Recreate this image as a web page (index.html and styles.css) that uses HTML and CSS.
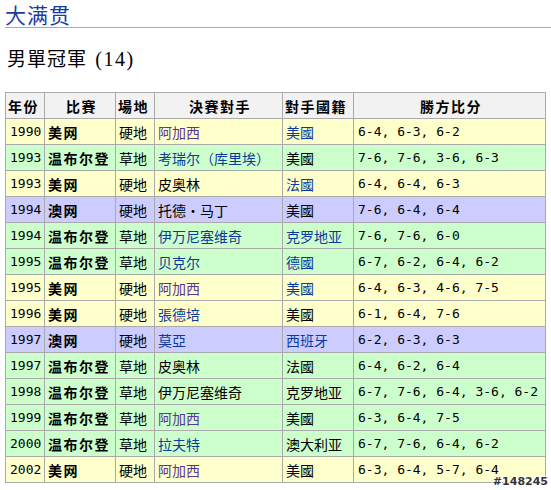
FILE: index.html
```html
<!DOCTYPE html>
<html>
<head>
<meta charset="utf-8">
<link rel="stylesheet" href="styles.css">
</head>
<body>
<h2 class="title">大满贯</h2>
<h3 class="sub">男單冠軍 <span class="cnt">(14)</span></h3>
<table class="grid">
<colgroup>
<col style="width:39px"><col style="width:71px"><col style="width:39px"><col style="width:128px"><col style="width:71px"><col style="width:192px">
</colgroup>
<thead>
<tr><th class="l">年份</th><th>比賽</th><th class="l">場地</th><th>決賽對手</th><th class="l">對手國籍</th><th>勝方比分</th></tr>
</thead>
<tbody>
<tr class="us"><td class="n">1990</td><td class="b">美网</td><td>硬地</td><td><span class="v">阿加西</span></td><td><span class="a">美國</span></td><td class="n">6-4, 6-3, 6-2</td></tr>
<tr class="wb"><td class="n">1993</td><td class="b">温布尔登</td><td>草地</td><td><span class="a">考瑞尔（库里埃）</span></td><td>美國</td><td class="n">7-6, 7-6, 3-6, 6-3</td></tr>
<tr class="us"><td class="n">1993</td><td class="b">美网</td><td>硬地</td><td>皮奥林</td><td><span class="a">法國</span></td><td class="n">6-4, 6-4, 6-3</td></tr>
<tr class="au"><td class="n">1994</td><td class="b">澳网</td><td>硬地</td><td>托德·马丁</td><td>美國</td><td class="n">7-6, 6-4, 6-4</td></tr>
<tr class="wb"><td class="n">1994</td><td class="b">温布尔登</td><td>草地</td><td><span class="a">伊万尼塞维奇</span></td><td><span class="a">克罗地亚</span></td><td class="n">7-6, 7-6, 6-0</td></tr>
<tr class="wb"><td class="n">1995</td><td class="b">温布尔登</td><td>草地</td><td><span class="a">贝克尔</span></td><td><span class="a">德國</span></td><td class="n">6-7, 6-2, 6-4, 6-2</td></tr>
<tr class="us"><td class="n">1995</td><td class="b">美网</td><td>硬地</td><td><span class="v">阿加西</span></td><td><span class="a">美國</span></td><td class="n">6-4, 6-3, 4-6, 7-5</td></tr>
<tr class="us"><td class="n">1996</td><td class="b">美网</td><td>硬地</td><td><span class="a">張德培</span></td><td>美國</td><td class="n">6-1, 6-4, 7-6</td></tr>
<tr class="au"><td class="n">1997</td><td class="b">澳网</td><td>硬地</td><td><span class="a">莫亞</span></td><td><span class="a">西班牙</span></td><td class="n">6-2, 6-3, 6-3</td></tr>
<tr class="wb"><td class="n">1997</td><td class="b">温布尔登</td><td>草地</td><td>皮奥林</td><td>法國</td><td class="n">6-4, 6-2, 6-4</td></tr>
<tr class="wb"><td class="n">1998</td><td class="b">温布尔登</td><td>草地</td><td>伊万尼塞维奇</td><td>克罗地亚</td><td class="n">6-7, 7-6, 6-4, 3-6, 6-2</td></tr>
<tr class="wb"><td class="n">1999</td><td class="b">温布尔登</td><td>草地</td><td><span class="v">阿加西</span></td><td>美國</td><td class="n">6-3, 6-4, 7-5</td></tr>
<tr class="wb"><td class="n">2000</td><td class="b">温布尔登</td><td>草地</td><td><span class="a">拉夫特</span></td><td>澳大利亚</td><td class="n">6-7, 7-6, 6-4, 6-2</td></tr>
<tr class="us"><td class="n">2002</td><td class="b">美网</td><td>硬地</td><td><span class="v">阿加西</span></td><td>美國</td><td class="n">6-3, 6-4, 5-7, 6-4</td></tr>
</tbody>
</table>
<div class="mark">#148245</div>
</body>
</html>
```
FILE: styles.css
```css
html, body {
  margin: 0;
  padding: 0;
  background: #fff;
}
body {
  padding: 1px 0 0 5px;
  font-family: "Noto Sans CJK SC", sans-serif;
  color: #000;
  position: relative;
  height: 489px;
  overflow: hidden;
}
.title {
  margin: 0;
  font-size: 21px;
  line-height: 26px;
  font-weight: normal;
  color: #1a3c9c;
  letter-spacing: 1px;
  border-bottom: 1px solid #aaa;
}
.sub {
  margin: 18px 0 21px 2px;
  font-size: 19px;
  line-height: 24px;
  font-weight: normal;
  letter-spacing: 1px;
}
.cnt {
  font-family: "Liberation Serif", serif;
  font-size: 20px;
  letter-spacing: 1.5px;
  margin-left: 3px;
}
.grid {
  border-collapse: collapse;
  table-layout: fixed;
  width: 540px;
  font-size: 14px;
}
.grid th, .grid td {
  border: 1px solid #aaa;
  height: 25px;
  padding: 0 0 0 3px;
  white-space: nowrap;
  overflow: hidden;
  line-height: 16px;
}
.grid th {
  background: #f2f2f2;
  font-weight: bold;
  letter-spacing: 1.5px;
  text-align: center;
}
.grid th.l {
  text-align: left;
  padding-left: 2px;
}
.grid td {
  text-align: left;
}
.grid td.n {
  font-family: "DejaVu Sans Mono", monospace;
  font-size: 13px;
  padding-left: 4px;
}
.grid td.b {
  font-weight: bold;
  letter-spacing: 1.5px;
}
.us td { background: #ffffcc; }
.wb td { background: #ccffcc; }
.au td { background: #ccccff; }
.a { color: #0b3a9c; }
.v { color: #5a3696; }
.mark {
  position: absolute;
  right: 3px;
  bottom: 2px;
  font-family: "DejaVu Sans", sans-serif;
  font-weight: bold;
  font-size: 11px;
  color: #333;
  text-shadow: 1px 0 #fff, -1px 0 #fff, 0 1px #fff, 0 -1px #fff;
}
```
